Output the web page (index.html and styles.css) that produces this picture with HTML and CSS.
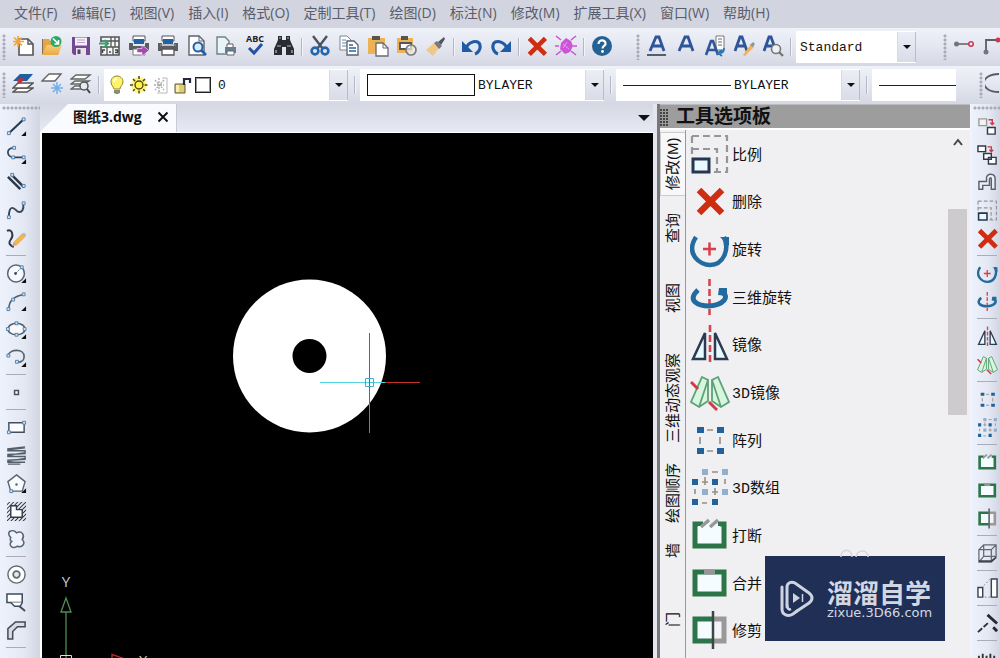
FILE: index.html
```html
<!DOCTYPE html>
<html lang="zh-CN">
<head>
<meta charset="utf-8">
<title>图纸3.dwg</title>
<link rel="stylesheet" href="styles.css">
</head>
<body>
<svg class="sprite" aria-hidden="true">
  <defs>
    <linearGradient id="g-folder" x1="0" y1="0" x2="0" y2="1"><stop offset="0" stop-color="#f8cf74"/><stop offset="1" stop-color="#eaa844"/></linearGradient>
    <pattern id="hatch" width="3" height="3" patternUnits="userSpaceOnUse" patternTransform="rotate(45)"><path d="M0 0V3" stroke="#333b48" stroke-width="2"/></pattern>
  </defs>
  <symbol id="new" viewBox="0 0 22 22"><path d="M7 4H16L21 9V20H7Z" fill="#fff" stroke="#555" stroke-width="1.6"/><path d="M16 4V9H21" fill="none" stroke="#555" stroke-width="1.4"/><path d="M6 1V12M1 6.500H12M2 2.500L10 10.500M10 2.500L2 10.500" stroke="#f0a63c" stroke-width="1.7"/></symbol>
  <symbol id="open" viewBox="0 0 22 22"><path d="M1 4H8L10 7H18V19H1Z" fill="#e8a546"/><path d="M1 4H2V19H1Z" fill="#7d7056"/><path d="M1 20L6 10H21L17 20Z" fill="url(#g-folder)"/><circle cx="15" cy="6.500" r="5.500" fill="#2fa866"/><path d="M12 3.500L17 8.500M17.500 5V9H13.500" stroke="#fff" stroke-width="1.6" fill="none"/></symbol>
  <symbol id="save" viewBox="0 0 22 22"><path d="M2 2H20V20H4L2 18Z" fill="#734a90"/><path d="M5 2.500H17V10.500H5Z" fill="#f6effa"/><path d="M7 5H15M7 7.500H15" stroke="#b9a3c8"/><path d="M6 13H16V20H6Z" fill="#e5e2e8"/><path d="M7.500 14.500H10.500V19H7.500Z" fill="#5f3c78"/></symbol>
  <symbol id="grid" viewBox="0 0 22 22"><path d="M2 2H20V20H2Z" fill="#f5f6f7" stroke="#555" stroke-width="1.6"/><path d="M2 6H20M2 12H20M12 2V12M16 2V12M8 12V20M14 12V20" stroke="#555" stroke-width="1.3"/><path d="M1 7H8V11H1Z" fill="#eef"/><path d="M0 8.500H8M5.500 5L9 8.500L5.500 12" stroke="#36a16d" stroke-width="2" fill="none"/><path d="M3.500 18V15H6M10 17H12M16 15H18.500V17.500H16" stroke="#444" stroke-width="1.5" fill="none"/></symbol>
  <symbol id="print" viewBox="0 0 22 22"><path d="M5 1H17V6H5Z" fill="#fff" stroke="#555"/><path d="M6 4H16V9H6Z" fill="#1f62a8"/><path d="M1 8H5V11H17V8H21V16H1Z" fill="#5a5d62"/><path d="M3 10H19" stroke="#999"/><path d="M5 14H17V20H5Z" fill="#fff" stroke="#555" stroke-width="1.3"/></symbol>
  <symbol id="export" viewBox="0 0 22 22"><path d="M5 1H17V6H5Z" fill="#fff" stroke="#555"/><path d="M6 4H16V9H6Z" fill="#1f62a8"/><path d="M1 8H5V11H17V8H21V15H1Z" fill="#5a5d62"/><path d="M5 14H17V20H5Z" fill="#fff" stroke="#777"/><path d="M9 13.500H14V10L21 15.500L14 21V17.500H9Z" fill="#a548b4" stroke="#f6e9f8" stroke-width=".6"/></symbol>
  <symbol id="preview" viewBox="0 0 22 22"><path d="M3 1H13L18 6V20H3Z" fill="#fff" stroke="#60636a" stroke-width="1.4"/><path d="M13 1V6H18" fill="none" stroke="#60636a"/><circle cx="12" cy="12" r="4.500" fill="#dceafb" stroke="#2460a4" stroke-width="2"/><path d="M15 15L20 20" stroke="#2460a4" stroke-width="2.600"/></symbol>
  <symbol id="pageprint" viewBox="0 0 22 22"><path d="M2 2H10L14 6V19H2Z" fill="#e8f4f6" stroke="#6f8289" stroke-width="1.4"/><path d="M12 9H18V13H12Z" fill="#fff" stroke="#5a6066"/><path d="M10 12H21V18H10Z" fill="#657e91"/><path d="M12 16H19V20H12Z" fill="#fff" stroke="#666"/></symbol>
  <symbol id="find" viewBox="0 0 22 22"><path d="M5 1H9V5H13V1H17V5L21 14V20H13V12H9V20H1V14L5 5Z" fill="#292c30"/><path d="M6 3H8M14 3H16M4 11H8M14 11H18M3 15V18M19 15V18" stroke="#b9bdc4" stroke-width="1.2"/></symbol>
  <symbol id="cut" viewBox="0 0 22 22"><path d="M4 1L14 14M18 1L8 14" stroke="#4a525d" stroke-width="2.400"/><circle cx="6" cy="16" r="3.400" fill="none" stroke="#2465ae" stroke-width="2.600"/><circle cx="16" cy="16" r="3.400" fill="none" stroke="#2465ae" stroke-width="2.600"/></symbol>
  <symbol id="copy" viewBox="0 0 22 22"><path d="M2 1H9L13 5V15H2Z" fill="#fff" stroke="#7d8791"/><path d="M4 5H8M4 8H9M4 11H9" stroke="#5e88b4"/><path d="M9 6H16L20 10V20H9Z" fill="#fff" stroke="#59626c" stroke-width="1.3"/><path d="M11 10H15M11 13H18M11 16H18" stroke="#2b65a3" stroke-width="1.3"/></symbol>
  <symbol id="paste" viewBox="0 0 22 22"><path d="M1 3H18V19H1Z" fill="#edb254"/><path d="M5 1H13V5H5Z" fill="#555"/><path d="M9 8H16L21 13V21H9Z" fill="#fff" stroke="#686b70" stroke-width="1.3"/><path d="M16 8V13H21" fill="none" stroke="#686b70"/></symbol>
  <symbol id="pasteblock" viewBox="0 0 22 22"><path d="M1 3H17V18H1Z" fill="#edb254"/><path d="M5 1H12V5H5Z" fill="#555"/><path d="M4 8H15V14H4Z" fill="#fff" stroke="#555" stroke-width="1.8"/><circle cx="15" cy="15" r="5" fill="#edf1f5" fill-opacity=".7" stroke="#747c86" stroke-width="1.7"/></symbol>
  <symbol id="brush" viewBox="0 0 22 22"><path d="M1 15L9 8L14 13L8 21Z" fill="#f0c789"/><path d="M9 8L12 6L17 11L14 14Z" fill="#77797e"/><path d="M13 7L19 2L20 4L16 10Z" fill="#53575c"/></symbol>
  <symbol id="undo" viewBox="0 0 22 22"><path d="M5 14C7 6 18 4 19 10C20 14 17 18 14 19" fill="none" stroke="#205ba5" stroke-width="3.200"/><path d="M1 6V17H12Z" fill="#205ba5"/></symbol>
  <symbol id="redo" viewBox="0 0 22 22"><path d="M17 14C15 6 4 4 3 10C2 14 5 18 8 19" fill="none" stroke="#205ba5" stroke-width="3.200"/><path d="M21 6V17H10Z" fill="#205ba5"/></symbol>
  <symbol id="x" viewBox="0 0 40 40"><path d="M9 9L32 32M32 9L9 32" stroke="#cf2c10" stroke-width="6.500"/></symbol>
  <symbol id="purge" viewBox="0 0 22 22"><path d="M11 3L16 6L18 11L15 17L10 19L5 14L6 8Z" fill="#cd53d8"/><path d="M1 1L6 5M21 1L16 5M1 20L6 16M21 20L16 16M0 11H4M18 11H22" stroke="#c456d0" stroke-width="1.6"/><path d="M8 9L14 14M12 7L8 13" stroke="#e7a0ee"/></symbol>
  <symbol id="help" viewBox="0 0 22 22"><circle cx="11" cy="11" r="10" fill="#246295"/><path d="M7.500 9C7.500 4 15 4.500 14.500 9C14.200 11 11.500 11 11.500 13.500" fill="none" stroke="#fff" stroke-width="2.200"/><circle cx="11.500" cy="16.500" r="1.400" fill="#fff"/></symbol>
  <symbol id="ta" viewBox="0 0 22 22"><path d="M4 16L10 2H13L18 16M6.500 11H15.500" fill="none" stroke="#2d5597" stroke-width="2.800"/></symbol>
  <symbol id="underline" viewBox="0 0 22 22"><use href="#ta"/><path d="M1 20H20" stroke="#4f6070" stroke-width="2"/></symbol>
  <symbol id="textpage" viewBox="0 0 22 22"><path d="M12 1H20V15H12Z" fill="#fff" stroke="#777"/><path d="M14 4H18M14 7H18M14 10H18" stroke="#666"/><path d="M2 20L7 6H9L14 20M4 15H12" fill="none" stroke="#2d5597" stroke-width="2.600"/><path d="M20 13Q20 18 16 18M18 15L14 18L18 21" stroke="#2b74b4" stroke-width="1.800" fill="none"/></symbol>
  <symbol id="textedit" viewBox="0 0 22 22"><path d="M2 16L7 2H9L14 16M4 11H12" fill="none" stroke="#2d5597" stroke-width="2.800"/><path d="M10 20L18 9L21 12L12 21Z" fill="#edb45e"/><path d="M17 10L20 7L22 9L20 12Z" fill="#8d969e"/></symbol>
  <symbol id="textfind" viewBox="0 0 22 22"><path d="M2 16L7 2H9L14 16M4 11H12" fill="none" stroke="#2d5597" stroke-width="2.800"/><circle cx="14" cy="14" r="4.500" fill="#eef0f5" stroke="#777" stroke-width="1.6"/><path d="M17 17L21 21" stroke="#777" stroke-width="2.400"/></symbol>
  <symbol id="dimline" viewBox="0 0 22 22"><path d="M3 9H16" stroke="#5a5e65" stroke-width="1.500"/><circle cx="3.500" cy="9" r="2.500" fill="#72767c"/><circle cx="18" cy="9" r="2.200" fill="none" stroke="#ca3d50" stroke-width="1.6"/></symbol>
  <symbol id="dimcorner" viewBox="0 0 22 22"><path d="M4 17V5H18" fill="none" stroke="#5a5e65" stroke-width="1.800"/><circle cx="4" cy="17" r="2.500" fill="#72767c"/><circle cx="16" cy="5" r="2.500" fill="#ca3d50"/></symbol>
  <symbol id="layers" viewBox="0 0 22 22"><path d="M1 19L6 15H21L15 19Z" fill="#fff" stroke="#555" stroke-width="1.500"/><path d="M1 15L6 10H21L15 15Z" fill="#fff" stroke="#555" stroke-width="1.500"/><path d="M1 8L8 1H21L15 8Z" fill="#205f9e"/><path d="M5 6L12 5L10 9L6 11Z" fill="#ca2d31"/></symbol>
  <symbol id="layerfreeze" viewBox="0 0 22 22"><path d="M1 8L8 1H20L14 8Z" fill="#fff" stroke="#666" stroke-width="1.400"/><path d="M16 9V21M10 15H22M12 11L20 19M20 11L12 19" stroke="#71aeea" stroke-width="1.500"/></symbol>
  <symbol id="layerfind" viewBox="0 0 22 22"><path d="M1 6L6 2H20L15 6ZM1 11L5 8H19L14 11ZM1 16L5 13H15L12 16Z" fill="#fff" stroke="#666" stroke-width="1.400"/><circle cx="14" cy="13" r="4" fill="#e6ecf2" stroke="#555" stroke-width="1.500"/><path d="M17 16L20 20" stroke="#444" stroke-width="2"/></symbol>
  <symbol id="bulb" viewBox="0 0 20 20"><path d="M7 14C6 11 4 10 4 7C4 -1 16 -1 16 7C16 10 13 11 13 14Z" fill="#fff36b" stroke="#8f8430"/><path d="M7 15H13V18L11 19H9L7 18Z" fill="#8c8b75"/><path d="M7 7C7 5 8 4 10 4" stroke="#fff" stroke-width="1.500" fill="none"/></symbol>
  <symbol id="sun" viewBox="0 0 20 20"><circle cx="10" cy="10" r="8" fill="#fff582"/><path d="M10 1V19M1 10H19M4 4L16 16M16 4L4 16" stroke="#4d4a15" stroke-width="1.500" stroke-dasharray="3 11.500"/><circle cx="10" cy="10" r="4" fill="#fff24f" stroke="#4f4a10" stroke-width="1.400"/></symbol>
  <symbol id="frost" viewBox="0 0 20 20"><path d="M8 3V17M3 10H13M4 5L13 15M13 5L4 15" stroke="#aaa" stroke-width="1.300" stroke-dasharray="2 1"/><path d="M11 3H16V18H6" fill="none" stroke="#b8b8b8"/></symbol>
  <symbol id="lock" viewBox="0 0 20 20"><path d="M2 9H12V18H2Z" fill="#dfcc74" stroke="#65592b"/><path d="M3 10H6V17H3Z" fill="#f7edb2"/><path d="M11 10V4H17V8" fill="none" stroke="#24273d" stroke-width="2.200"/></symbol>
  <symbol id="arc-big" viewBox="0 0 22 22"><path d="M14 1C-6 1 -6 19 14 19" fill="none" stroke="#545d67" stroke-width="1.800"/></symbol>

  <symbol id="fly" viewBox="0 0 22 22"><path d="M21 16V21H16Z" fill="#111"/></symbol>
  <symbol id="line" viewBox="0 0 22 22"><path d="M3 18L18 4" stroke="#263850" stroke-width="2.200"/><path d="M1.500 16.500H4.500V19.500H1.500ZM17 2H20V5H17Z" class="grip"/><use href="#fly"/></symbol>
  <symbol id="pline" viewBox="0 0 22 22"><path d="M8 4C-1 4 1 14 8 14H18" fill="none" stroke="#34445b" stroke-width="1.800"/><path d="M7 2.500H10V5.500H7ZM6 12.500H9V15.500H6ZM17 12.500H20V15.500H17Z" class="grip"/><use href="#fly"/></symbol>
  <symbol id="mline" viewBox="0 0 22 22"><path d="M2 5L15 18M6 3L19 16" stroke="#2b394c" stroke-width="2.600"/><path d="M5 1.500H8V4.500H5ZM17 13H20V16H17Z" class="grip"/></symbol>
  <symbol id="spline" viewBox="0 0 22 22"><path d="M3 18C3 2 10 10 12 12C17 14 19 9 18 4" fill="none" stroke="#37475c" stroke-width="2"/><path d="M1.500 16.500H4.500V19.500H1.500ZM17 2H20V5H17Z" class="grip"/></symbol>
  <symbol id="sketch" viewBox="0 0 22 22"><path d="M1 3C7 0 8 9 5 12C2 16 4 18 8 20" fill="none" stroke="#2b384a" stroke-width="2"/><path d="M8 15L17 6L20 9L11 18Z" fill="#f0b550" stroke="#f0b550"/><path d="M6 19L8 15L11 18Z" fill="#d99e76"/><path d="M17 6L19 5L21 7L20 9Z" fill="#aeb4bb"/></symbol>
  <symbol id="circle" viewBox="0 0 22 22"><circle cx="10.500" cy="11" r="8.800" fill="#f7f9fd" stroke="#586676" stroke-width="1.600"/><path d="M10 11L16 5" stroke="#456b91" stroke-dasharray="2 1"/><circle cx="10" cy="11" r="1.500" fill="#33526f"/><path d="M15 3H18V6H15Z" class="grip"/><use href="#fly"/></symbol>
  <symbol id="arc" viewBox="0 0 22 22"><path d="M3 19C3 9 10 5 19 4" fill="none" stroke="#526172" stroke-width="1.700"/><path d="M1 17.500H4V20.500H1ZM6 7.500H9V10.500H6ZM17 2H20V5H17Z" class="grip"/><use href="#fly"/></symbol>
  <symbol id="ellipse" viewBox="0 0 22 22"><ellipse cx="11" cy="10.500" rx="9" ry="6" fill="#f7f9fd" stroke="#56626e" stroke-width="1.700"/><path d="M9.500 3H12.500V6H9.500ZM.5 9H3.500V12H.5ZM18 9H21V12H18ZM9.500 15H12.500V18H9.500Z" class="grip"/><use href="#fly"/></symbol>
  <symbol id="earc" viewBox="0 0 22 22"><path d="M2 9C4 2 19 1 19 10C19 14 16 16 12 16" fill="none" stroke="#56626e" stroke-width="1.700"/><path d="M1 7.500H4V10.500H1ZM10 14H13V17H10Z" class="grip"/><use href="#fly"/></symbol>
  <symbol id="point" viewBox="0 0 22 22"><path d="M9 9H13V13H9Z" fill="#fff" stroke="#4a535d" stroke-width="1.600"/></symbol>
  <symbol id="rect" viewBox="0 0 22 22"><path d="M3 6H19V16H3Z" fill="#fbfcff" stroke="#424e5f" stroke-width="1.500"/><path d="M1.500 14.500H4.500V17.500H1.500ZM17.500 4.500H20.500V7.500H17.500Z" class="grip"/></symbol>
  <symbol id="helix" viewBox="0 0 22 22"><path d="M20 2L2 4V6L20 6V9L2 10V12L20 12V15L2 16V18L20 18M20 3L2 5M20 8L2 11M20 14L2 17M2 20H15" stroke="#555f6b" stroke-width="1.500" fill="none"/></symbol>
  <symbol id="polygon" viewBox="0 0 22 22"><path d="M11 2L20 9L17 19H5L2 9Z" fill="#fafbff" stroke="#576574" stroke-width="1.500"/><circle cx="11" cy="12" r="1.300" fill="#496887"/><path d="M4 17.500H7V20.500H4Z" class="grip"/><use href="#fly"/></symbol>
  <symbol id="hatchicon" viewBox="0 0 22 22"><path d="M1 1H21V21H1Z" fill="url(#hatch)"/><path d="M5 5H11V9H17V17H5Z" fill="#fff" stroke="#333d4c" stroke-width="1.500"/></symbol>
  <symbol id="cloud" viewBox="0 0 22 22"><path d="M5 9C-1 3 7 -1 11 4C17 1 20 7 17 11C21 15 17 20 12 18C6 22 2 16 6 13C4 12 4 11 5 9Z" fill="#eef2fb" stroke="#566779" stroke-width="1.600"/></symbol>
  <symbol id="donut" viewBox="0 0 22 22"><circle cx="11" cy="11" r="9" fill="#fff" stroke="#606a75" stroke-width="1.500"/><circle cx="11" cy="11" r="3.500" fill="#e3e9f3" stroke="#606a75" stroke-width="1.800"/></symbol>
  <symbol id="wipe" viewBox="0 0 22 22"><path d="M1 2H17V11H1Z" fill="#fff" stroke="#3e4b5b" stroke-width="1.600"/><path d="M5 11L9 15H15L17 11" fill="#fff" stroke="#3e4b5b" stroke-width="1.500"/><path d="M14 15L20 20" stroke="#3e4b5b" stroke-width="2"/></symbol>
  <symbol id="road" viewBox="0 0 22 22"><path d="M2 20V9L10 2H20V7H12L7 12V20Z" fill="#d8dce4" stroke="#424c59" stroke-width="1.600"/></symbol>

  <symbol id="scale" viewBox="0 0 40 40"><path d="M2 2H37V38H20M2 2V20M2 15H27V38" fill="none" stroke="#969696" stroke-width="2.200" stroke-dasharray="7 4"/><path d="M3 25H19V38H3Z" fill="#eaf9ff" stroke="#25364e" stroke-width="3"/></symbol>
  <symbol id="rotate" viewBox="0 0 40 40"><path d="M6 8C-5 25 10 36 20 36C33 36 40 21 34 8" fill="none" stroke="#236b9f" stroke-width="4.500"/><path d="M30 8H39V17Z" fill="#236b9f"/><path d="M13 20H26M19.500 13.500V26.500" stroke="#d93d49" stroke-width="2.500"/></symbol>
  <symbol id="rotate3d" viewBox="0 0 40 40"><path d="M19.500 2V38" stroke="#d74551" stroke-width="2.600" stroke-dasharray="7 3"/><path d="M8 13C-4 24 9 29 19 29C33 28 41 20 31 14" fill="none" stroke="#236b9f" stroke-width="5"/><path d="M29 11H37V19L28 18Z" fill="#236b9f"/></symbol>
  <symbol id="mirror" viewBox="0 0 40 40"><path d="M15 9V35H3ZM25 9V35H37Z" fill="#e8faff" stroke="#2b3b52" stroke-width="2.500"/><path d="M20 1V40" stroke="#d6424e" stroke-width="2.600" stroke-dasharray="7 3"/></symbol>
  <symbol id="mirror3d" viewBox="0 0 40 40"><path d="M12 5L18 8L9 35L1 30ZM28 5L22 8L31 35L39 30ZM18 8V29L9 35M22 8V29L31 35" fill="#d7f5df" stroke="#5da276" stroke-width="1.800"/><path d="M1 10L8 17M19 30L27 38" stroke="#d23b45" stroke-width="3"/></symbol>
  <symbol id="array" viewBox="0 0 40 40"><path d="M17 10H23M17 31H23M10 17V24M30 17V24" stroke="#979084" stroke-width="1.700"/><path d="M7 7H14V13H7ZM27 7H34V13H27ZM7 28H14V34H7ZM27 28H34V34H27Z" fill="#22629c"/></symbol>
  <symbol id="array3d" viewBox="0 0 40 40"><path d="M12 2H18V8H12ZM32 2H38V8H32ZM12 22H18V28H12ZM32 22H38V28H32Z" fill="#94afce"/><path d="M22 5H28M35 12V17M15 10V18M22 25H28M25 21V28M12 15H18M5 22V27M12 36H17" stroke="#979084" stroke-width="1.600"/><path d="M2 12H8V18H2ZM22 12H28V18H22ZM2 32H8V38H2ZM22 32H28V38H22Z" fill="#22629c"/></symbol>
  <symbol id="break" viewBox="0 0 40 40"><path d="M13 9H5V31H34V9H28" fill="#f4fcff" stroke="#2c7549" stroke-width="5"/><path d="M8 11H30V17H8Z" fill="#f4fcff"/><path d="M11 12L19 5M20 12L28 5" stroke="#989898" stroke-width="3.500"/></symbol>
  <symbol id="join" viewBox="0 0 40 40"><path d="M5 9H34V31H5Z" fill="#f4fcff" stroke="#2c7549" stroke-width="5"/><path d="M14 9H25" stroke="#969696" stroke-width="5"/></symbol>
  <symbol id="trim" viewBox="0 0 40 40"><path d="M22 9H5V31H22" fill="#f4fcff" stroke="#2c7549" stroke-width="5"/><path d="M24 9H34V31H24" fill="#f4f4f6" stroke="#999" stroke-width="5"/><path d="M23 1V39" stroke="#3c464a" stroke-width="2.500"/></symbol>
  <symbol id="copyobj" viewBox="0 0 22 22"><path d="M2 3H10V10H2Z" fill="#f3f3f3" stroke="#999" stroke-width="1.400"/><path d="M11 12H19V19H11Z" fill="#fff" stroke="#303a46" stroke-width="1.500"/><path d="M12 4H16V9M14 7L16 9L18 7" stroke="#cf3948" stroke-width="1.500" fill="none"/></symbol>
  <symbol id="copymany" viewBox="0 0 22 22"><path d="M1 2H9V8H1ZM7 10H15V16H7ZM12 14H20V21H12Z" fill="#fff" stroke="#303a46" stroke-width="1.500"/><path d="M11 3H15V8M13 6L15 8L17 6" stroke="#cf3948" stroke-width="1.500" fill="none"/></symbol>
  <symbol id="offset" viewBox="0 0 22 22"><path d="M2 18V10H10V6C10 1 19 1 19 7V18H15V8C15 5 13 6 13 8V14H6V18Z" fill="#ecf0f5" stroke="#56606b" stroke-width="1.500"/></symbol>
  <symbol id="cube" viewBox="0 0 22 22"><path d="M2 7L7 2H20V15L15 20H2ZM2 7H15V20M15 7L20 2M7 2V14L2 20M7 14H20" fill="none" stroke="#626872" stroke-width="1.300"/><path d="M2 19H15L20 15" fill="none" stroke="#3e4650" stroke-width="1.800"/></symbol>
  <symbol id="stretch" viewBox="0 0 22 22"><path d="M1 10H6V20H1ZM15 1H21V20H15Z" fill="#fff" stroke="#38434f" stroke-width="1.500"/><path d="M7 8L14 1M8 20H14" stroke="#888" stroke-dasharray="2 2"/></symbol>
  <symbol id="extend" viewBox="0 0 22 22"><path d="M1 20L12 10" stroke="#2c3238" stroke-width="2" stroke-dasharray="6 2"/><path d="M11 2L21 11M17 15L21 19" stroke="#23292e" stroke-width="3"/></symbol>
  <symbol id="tail" viewBox="0 0 22 22"><path d="M2 8V18M6 6V16M10 8V18M14 6V16M18 8V18" stroke="#333" stroke-width="2"/></symbol>
</svg>

<nav class="menubar">
  <button>文件(F)</button><button>编辑(E)</button><button>视图(V)</button><button>插入(I)</button><button>格式(O)</button><button>定制工具(T)</button><button>绘图(D)</button><button>标注(N)</button><button>修改(M)</button><button>扩展工具(X)</button><button>窗口(W)</button><button>帮助(H)</button>
</nav>

<div class="toolrow">
  <div class="bar"><i class="dots"></i>
    <button class="tool" aria-label="新建"><svg><use href="#new"/></svg></button>
    <button class="tool" aria-label="打开"><svg><use href="#open"/></svg></button>
    <button class="tool" aria-label="保存"><svg><use href="#save"/></svg></button>
    <button class="tool" aria-label="图纸集"><svg><use href="#grid"/></svg></button>
    <button class="tool" aria-label="输出"><svg><use href="#export"/></svg></button>
    <button class="tool" aria-label="打印"><svg><use href="#print"/></svg></button>
    <button class="tool" aria-label="打印预览"><svg><use href="#preview"/></svg></button>
    <button class="tool" aria-label="页面打印"><svg><use href="#pageprint"/></svg></button>
    <button class="tool" aria-label="拼写检查"><svg viewBox="0 0 22 22"><path d="M5 13L10 18L18 9" fill="none" stroke="#2453a4" stroke-width="3"/><text x="11" y="7" text-anchor="middle" class="abc">ABC</text></svg></button>
    <button class="tool" aria-label="查找"><svg><use href="#find"/></svg></button>
    <i class="sep"></i>
    <button class="tool" aria-label="剪切"><svg><use href="#cut"/></svg></button>
    <button class="tool" aria-label="复制"><svg><use href="#copy"/></svg></button>
    <button class="tool" aria-label="粘贴"><svg><use href="#paste"/></svg></button>
    <button class="tool" aria-label="粘贴为块"><svg><use href="#pasteblock"/></svg></button>
    <button class="tool" aria-label="特性匹配"><svg><use href="#brush"/></svg></button>
    <i class="sep"></i>
    <button class="tool" aria-label="撤销"><svg><use href="#undo"/></svg></button>
    <button class="tool" aria-label="重做"><svg><use href="#redo"/></svg></button>
    <i class="sep"></i>
    <button class="tool large" aria-label="删除"><svg><use href="#x"/></svg></button>
    <button class="tool" aria-label="清理"><svg><use href="#purge"/></svg></button>
    <i class="sep"></i>
    <button class="tool" aria-label="帮助"><svg><use href="#help"/></svg></button>
  </div>
  <div class="bar"><i class="dots"></i>
    <button class="tool" aria-label="多行文字"><svg><use href="#underline"/></svg></button>
    <button class="tool" aria-label="单行文字"><svg><use href="#ta"/></svg></button>
    <button class="tool" aria-label="文字样式"><svg><use href="#textpage"/></svg></button>
    <button class="tool" aria-label="编辑文字"><svg><use href="#textedit"/></svg></button>
    <button class="tool" aria-label="查找文字"><svg><use href="#textfind"/></svg></button>
    <i class="sep"></i>
    <div class="combo short"><select aria-label="文字样式"><option>Standard</option></select><i class="drop"></i></div>
  </div>
  <div class="bar"><i class="dots"></i>
    <button class="tool" aria-label="线性标注"><svg><use href="#dimline"/></svg></button>
    <button class="tool" aria-label="引线"><svg><use href="#dimcorner"/></svg></button>
  </div>
</div>

<div class="toolrow">
  <div class="bar"><i class="dots"></i>
    <button class="tool" aria-label="图层"><svg><use href="#layers"/></svg></button>
    <button class="tool" aria-label="冻结图层"><svg><use href="#layerfreeze"/></svg></button>
    <button class="tool" aria-label="查找图层"><svg><use href="#layerfind"/></svg></button>
    <i class="sep"></i>
    <div class="combo"><span class="states"><svg><use href="#bulb"/></svg><svg><use href="#sun"/></svg><svg><use href="#frost"/></svg><svg><use href="#lock"/></svg><i class="layercolor"></i></span><select class="layer" aria-label="图层"><option>0</option></select><i class="drop"></i></div>
    <i class="sep"></i>
    <div class="combo"><i class="swatch"></i><select aria-label="颜色"><option>BYLAYER</option></select><i class="drop"></i></div>
    <i class="sep"></i>
    <div class="combo"><i class="stroke"></i><select aria-label="线型"><option>BYLAYER</option></select><i class="drop"></i></div>
    <i class="sep"></i>
    <button class="combo weight" aria-label="线宽"><i class="stroke"></i></button>
  </div>
  <div class="bar"><i class="dots"></i><button class="tool start" aria-label="圆弧"><svg><use href="#arc-big"/></svg></button></div>
</div>

<main class="work">
  <aside class="side">
    <i class="dots flat"></i>
    <button class="tool" aria-label="直线"><svg><use href="#line"/></svg></button>
    <button class="tool" aria-label="多段线"><svg><use href="#pline"/></svg></button>
    <button class="tool" aria-label="多线"><svg><use href="#mline"/></svg></button>
    <button class="tool" aria-label="样条曲线"><svg><use href="#spline"/></svg></button>
    <button class="tool" aria-label="徒手画"><svg><use href="#sketch"/></svg></button>
    <i class="rule"></i>
    <button class="tool" aria-label="圆"><svg><use href="#circle"/></svg></button>
    <button class="tool" aria-label="圆弧"><svg><use href="#arc"/></svg></button>
    <button class="tool" aria-label="椭圆"><svg><use href="#ellipse"/></svg></button>
    <button class="tool" aria-label="椭圆弧"><svg><use href="#earc"/></svg></button>
    <i class="rule"></i>
    <button class="tool" aria-label="点"><svg><use href="#point"/></svg></button>
    <i class="rule"></i>
    <button class="tool" aria-label="矩形"><svg><use href="#rect"/></svg></button>
    <button class="tool" aria-label="螺旋"><svg><use href="#helix"/></svg></button>
    <button class="tool" aria-label="多边形"><svg><use href="#polygon"/></svg></button>
    <button class="tool" aria-label="填充"><svg><use href="#hatchicon"/></svg></button>
    <button class="tool" aria-label="云线"><svg><use href="#cloud"/></svg></button>
    <i class="rule"></i>
    <button class="tool" aria-label="圆环"><svg><use href="#donut"/></svg></button>
    <button class="tool" aria-label="区域覆盖"><svg><use href="#wipe"/></svg></button>
    <button class="tool" aria-label="墙线"><svg><use href="#road"/></svg></button>
    <i class="rule"></i>
  </aside>

  <section class="document">
    <header class="tabs">
      <div class="tab"><span>图纸3.dwg</span><button aria-label="关闭"><svg viewBox="0 0 12 12"><path d="M1.500 1.500L10.500 10.500M10.500 1.500L1.500 10.500" stroke="#111" stroke-width="2"/></svg></button></div>
      <button class="more" aria-label="更多"><i class="caret"></i></button>
    </header>
    <svg class="drawing" role="img" aria-label="圆环">
      <circle cx="267.500" cy="223" r="76.500" fill="#fff"/><circle cx="267.500" cy="223" r="17" fill="#000"/>
      <g fill="none">
        <path d="M278 249.500H343" stroke="#4fd3df"/><path d="M343 249.500H378" stroke="#c8302a"/>
        <path d="M327.500 200V271" stroke="#b42cc4"/><path d="M327.500 271V300" stroke="#34b345"/>
        <path d="M323.500 245.500H331.500V253.500H323.500Z" stroke="#46aec9"/>
      </g>
      <g fill="none" stroke="#508c56" stroke-width="1.300"><path d="M24 526V479M19 479L24 465L29 479Z"/></g>
      <path d="M18.500 530V522.500H29.500V530" fill="none" stroke="#ddd"/>
      <path d="M70 530V521.500L86 527" fill="none" stroke="#c22c2c" stroke-width="1.300"/>
      <text x="24" y="454" class="axis">Y</text><text x="101" y="533" class="axis">X</text>
    </svg>
  </section>

  <section class="palette">
    <header class="title"><i class="dots"></i><h2>工具选项板</h2></header>
    <div class="content">
      <nav class="categories">
        <button class="active">修改(M)</button><button>查询</button><button class="apart">视图</button><button class="apart">三维动态观察</button><button>绘图顺序</button><button>墙</button><button class="far">门</button>
      </nav>
      <div class="list">
        <button><svg><use href="#scale"/></svg>比例</button>
        <button><svg><use href="#x"/></svg>删除</button>
        <button><svg><use href="#rotate"/></svg>旋转</button>
        <button><svg><use href="#rotate3d"/></svg>三维旋转</button>
        <button><svg><use href="#mirror"/></svg>镜像</button>
        <button><svg><use href="#mirror3d"/></svg>3D镜像</button>
        <button><svg><use href="#array"/></svg>阵列</button>
        <button><svg><use href="#array3d"/></svg>3D数组</button>
        <button><svg><use href="#break"/></svg>打断</button>
        <button><svg><use href="#join"/></svg>合并</button>
        <button><svg><use href="#trim"/></svg>修剪</button>
      </div>
      <div class="scroll"><button aria-label="向上滚动"><svg viewBox="0 0 12 12"><path d="M2 9L6 4L10 9" fill="none" stroke="#444" stroke-width="2"/></svg></button><i class="thumb"></i></div>
    </div>
  </section>

  <aside class="side right">
    <i class="dots flat"></i>
    <button class="tool" aria-label="复制对象"><svg><use href="#copyobj"/></svg></button>
    <button class="tool" aria-label="多重复制"><svg><use href="#copymany"/></svg></button>
    <button class="tool" aria-label="偏移"><svg><use href="#offset"/></svg></button>
    <button class="tool" aria-label="比例"><svg><use href="#scale"/></svg></button>
    <button class="tool large" aria-label="删除"><svg><use href="#x"/></svg></button>
    <i class="rule"></i>
    <button class="tool" aria-label="旋转"><svg><use href="#rotate"/></svg></button>
    <button class="tool" aria-label="三维旋转"><svg><use href="#rotate3d"/></svg></button>
    <i class="rule"></i>
    <button class="tool" aria-label="镜像"><svg><use href="#mirror"/></svg></button>
    <button class="tool" aria-label="3D镜像"><svg><use href="#mirror3d"/></svg></button>
    <i class="rule"></i>
    <button class="tool" aria-label="阵列"><svg><use href="#array"/></svg></button>
    <button class="tool" aria-label="3D数组"><svg><use href="#array3d"/></svg></button>
    <i class="rule"></i>
    <button class="tool" aria-label="打断"><svg><use href="#break"/></svg></button>
    <button class="tool" aria-label="合并"><svg><use href="#join"/></svg></button>
    <button class="tool" aria-label="修剪"><svg><use href="#trim"/></svg></button>
    <i class="rule"></i>
    <button class="tool" aria-label="三维"><svg><use href="#cube"/></svg></button>
    <i class="rule"></i>
    <button class="tool" aria-label="拉伸"><svg><use href="#stretch"/></svg></button>
    <i class="rule"></i>
    <button class="tool" aria-label="延伸"><svg><use href="#extend"/></svg></button>
    <i class="rule"></i>
    <button class="tool" aria-label="长度"><svg><use href="#tail"/></svg></button>
  </aside>
</main>

<div class="watermark">
  <svg class="ears" viewBox="0 0 32 8" aria-hidden="true"><path d="M2 8C2 -1 13 -1 13 8M17 8C18 0 29 0 29 8" fill="none" stroke="#d5d4d8" stroke-width="1.500"/></svg>
  <svg class="logo" viewBox="0 0 36 38" aria-hidden="true"><path d="M8 27V7C8 3 12 1 16 3L30 13C34 16 34 20 30 23L18 31" fill="none" stroke="#cdd3df" stroke-width="3" stroke-linecap="round"/><path d="M3 7V29C3 35 9 37 14 34L18 31" fill="none" stroke="#cdd3df" stroke-width="3" stroke-linecap="round"/><path d="M8 24C8 29 10 30 12 29" fill="none" stroke="#cdd3df" stroke-width="2.500"/><path d="M14 13V23L21 18Z" fill="#cdd3df"/><path d="M23.500 14V22" stroke="#cdd3df" stroke-width="1.500"/></svg>
  <div><strong>溜溜自学</strong><small>zixue.3D66.com</small></div>
</div>
</body>
</html>
```
FILE: styles.css
```css
* { box-sizing: border-box; }
body {
  margin: 0;
  height: 100vh;
  display: flex;
  flex-direction: column;
  overflow: hidden;
  position: relative;
  background: #d9dce7;
  color: #111;
  font-family: "Liberation Sans", "Noto Sans CJK SC", sans-serif;
}
button, select { border: 0; padding: 0; margin: 0; background: none; font: inherit; color: inherit; }
i { display: block; flex: none; }
svg { display: block; flex: none; }
.sprite { position: absolute; width: 0; height: 0; }
.abc { font: bold 9px "Open Sans", sans-serif; fill: #222; }
.grip { fill: #d9e8f8; stroke: #517eaa; stroke-width: 1; }

.menubar {
  flex: none;
  height: 28px;
  padding: 0 14px 2px;
  display: flex;
  align-items: center;
  gap: 14px;
  background: #d2d4df;
  color: #595c6b;
  font: 14px/20px "Open Sans", "Noto Sans CJK SC", sans-serif;
  white-space: nowrap;
}

.toolrow {
  flex: none;
  height: 38px;
  display: flex;
  gap: 18px;
  background: linear-gradient(#f0f2fa, #e5e7f1 45%, #d5d8e4);
}
.bar { display: flex; align-items: center; flex: none; }
.tool { width: 29px; height: 28px; flex: none; display: flex; align-items: center; justify-content: center; }
.tool svg { width: 22px; height: 22px; overflow: visible; }
.toolrow .tool { padding-bottom: 2px; }
.tool.start { justify-content: flex-start; }
.tool.large svg { width: 28px; height: 28px; }
.dots {
  width: 8px;
  height: 26px;
  background: radial-gradient(circle at 4px 2px, #a9acb8 1px, transparent 2px) 0 0 / 8px 4px;
}
.dots.flat {
  width: auto;
  height: 8px;
  align-self: stretch;
  background: radial-gradient(circle at 2px 4px, #a9acb8 1px, transparent 2px) 0 0 / 4px 8px repeat-x;
}
.sep { width: 1px; height: 18px; margin: 0 3px; background: #b4b7c4; box-shadow: 1px 0 #f4f5fa; }

.combo {
  width: 244px;
  height: 32px;
  margin: 0 3px 0 2px;
  display: flex;
  align-items: center;
  background: #fff;
  font: 13px "Liberation Mono", monospace;
}
.combo.short { width: 120px; margin-right: 7px; }
.combo.short select { padding-left: 4px; }
.combo.weight { width: 84px; overflow: hidden; }
.combo select { flex: 1; min-width: 0; align-self: stretch; appearance: none; padding-left: 3px; outline: 0; }
.combo select.layer { padding-left: 7px; }
.drop {
  width: 19px;
  height: 30px;
  border-left: 1px solid #d8dae4;
  border-right: 1px solid #b9bcc9;
  background: linear-gradient(#eceef6, #d9dce8);
  display: flex;
  align-items: center;
  justify-content: center;
}
.drop::before, .caret { content: ""; width: 0; border: 4px solid transparent; border-top: 4px solid #111; border-bottom: 0; }
.states { display: flex; align-items: center; gap: 2px; padding-left: 3px; }
.states svg { width: 20px; height: 20px; }
.layercolor { width: 16px; height: 16px; border: 1px solid #222; outline: 1px solid #999; outline-offset: -2px; }
.swatch { width: 108px; height: 22px; margin-left: 7px; border: 1px solid #111; }
.stroke { width: 108px; height: 1px; margin-left: 7px; background: #222; }

.work { flex: 1; min-height: 0; display: flex; }
.side {
  width: 40px;
  flex: none;
  display: flex;
  flex-direction: column;
  overflow: hidden;
  padding-left: 2px;
  background: linear-gradient(90deg, #edf2fc, #e4e8f3 60%, #d2d6e3);
}
.side .tool svg { width: 21px; height: 21px; }
.side .tool.large svg { width: 29px; height: 29px; }
.side.right { width: 30px; border-left: 1px solid #f5f6fb; }
.rule { width: 20px; height: 1px; margin: 3px 4px; background: #a9adb9; }

.document { flex: 1; min-width: 0; display: flex; flex-direction: column; padding-right: 4px; background: #e3e5ef; }
.tabs {
  height: 28px;
  flex: none;
  display: flex;
  align-items: stretch;
  justify-content: space-between;
  background: linear-gradient(#d5d8e3, #e7e9f3);
}
.tab {
  padding: 0 7px 2px 33px;
  display: flex;
  align-items: center;
  gap: 15px;
  background: #fafbff;
  border-right: 1px solid #b9bcc8;
  clip-path: polygon(28px 0, 100% 0, 100% 100%, 0 100%);
  font: bold 14px/20px "Open Sans", "Noto Sans CJK SC", sans-serif;
}
.tab svg { width: 12px; height: 12px; }
.more { width: 18px; display: flex; align-items: center; justify-content: center; }
.caret { border-width: 6px 6px 0; }
.drawing { flex: 1; min-height: 0; width: 100%; background: #000; border: solid #fff; border-width: 1px 0 0 2px; }
.axis { fill: #ccc; font: 15px "Open Sans", sans-serif; text-anchor: middle; }

.palette { width: 313px; flex: none; display: flex; flex-direction: column; border-left: 3px solid #777; background: #f0eff1; }
.title { flex: none; height: 24px; display: flex; align-items: center; background: #9d9d9d; border-top: 1px solid #bbb; }
.title .dots { height: 18px; background: radial-gradient(circle at 2px 2px, #444 1px, transparent 1px) 2px 0 / 3px 3px; }
.title h2 { margin: 0 0 0 8px; font: bold 19px/22px "Liberation Serif", "Noto Sans CJK SC", serif; }
.content { flex: 1; min-height: 0; display: flex; border-top: 2px solid #fff; }
.categories {
  width: 26px;
  flex: none;
  display: flex;
  flex-direction: column;
  align-items: stretch;
  gap: 20px;
  border-right: 1px solid #999;
  padding-top: 2px;
  font: 15px "Liberation Sans", "Noto Sans CJK SC", sans-serif;
  white-space: nowrap;
}
.categories button { writing-mode: vertical-rl; text-orientation: sideways; transform: rotate(180deg); line-height: 22px; }
.categories .active { height: 64px; margin-bottom: -3px; background: #f8f8fa; border: 1px solid #ccc; border-left: 0; }
.categories .apart { margin-top: 20px; }
.categories .far { margin-top: 34px; }
.list { flex: 1; min-width: 0; padding: 0 0 4px 4px; display: flex; flex-direction: column; }
.list button {
  flex: 1;
  min-height: 0;
  display: flex;
  align-items: center;
  gap: 2px;
  font: 15px "Liberation Mono", "Noto Sans CJK SC", sans-serif;
}
.list svg { width: 40px; height: 40px; }
.scroll { width: 22px; flex: none; display: flex; flex-direction: column; padding-right: 3px; }
.scroll button { height: 79px; flex: none; padding: 6px 4px; display: flex; }
.scroll svg { width: 12px; height: 12px; }
.thumb { height: 39%; background: #cdcbcd; }

.watermark {
  position: absolute;
  right: 55px;
  bottom: 17px;
  width: 180px;
  height: 85px;
  display: flex;
  align-items: center;
  gap: 12px;
  padding-left: 14px;
  background: #202f56;
  color: #d2d7e2;
}
.ears { position: absolute; left: 74px; top: -7px; width: 32px; height: 8px; }
.logo { width: 36px; height: 38px; }
.watermark div { display: flex; flex-direction: column; }
.watermark strong { font: bold 26px/28px "Noto Sans CJK SC", sans-serif; }
.watermark small { font: 13px/14px "DejaVu Sans", sans-serif; }
```
